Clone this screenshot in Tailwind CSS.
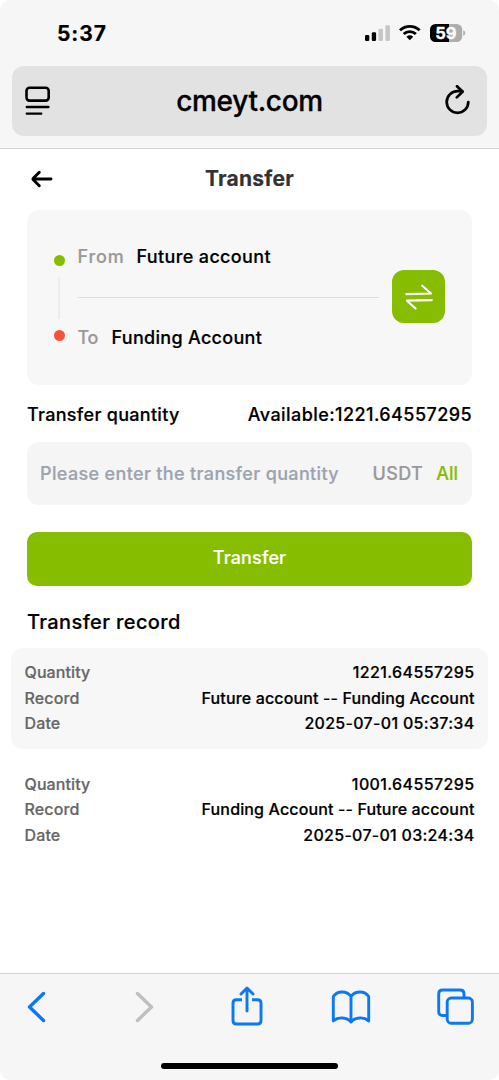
<!DOCTYPE html>
<html lang="en">
<head>
<meta charset="utf-8">
<title>Transfer</title>
<script src="https://cdn.jsdelivr.net/npm/@tailwindcss/browser@4"></script>
</head>
<body class="bg-white">
<div class="flex h-[1080px] w-[499px] flex-col overflow-hidden bg-white font-['Inter',sans-serif] font-medium text-black [-webkit-text-stroke:0.2px]">

  <!-- Status bar and address bar -->
  <header class="h-[149px] shrink-0 rounded-t-[10px] border-b border-[#d4d4d4] bg-[#f6f6f6]">
    <div class="flex h-[66px] items-center justify-between pr-[33px] pl-[57px]">
      <div class="pt-px text-[21px] leading-none font-bold tracking-[0.9px]">5:37</div>
      <svg class="h-[18px] w-[102px]" viewBox="0 0 102 18">
        <g transform="translate(1 1)">
          <rect x="0" y="10" width="4.300" height="6" rx="1.300"/>
          <rect x="6.800" y="7.300" width="4.300" height="8.700" rx="1.300"/>
          <rect x="13.500" y="3.800" width="4.500" height="12.200" rx="1.300" fill="#c6c6c6"/>
          <rect x="20.400" y="0.300" width="4.500" height="15.700" rx="1.300" fill="#c6c6c6"/>
        </g>
        <g fill="none" stroke="#000" stroke-width="2.900">
          <path d="M36 6.300a14.200 14.200 0 0 1 19.600 0"/>
          <path d="M39.700 10a9 9 0 0 1 12.200 0"/>
        </g>
        <path d="M42.400 12.700a5.200 5.200 0 0 1 6.800 0L45.800 16.200z"/>
        <path d="M71.500 0H85.100V18H71.500A5.500 5.500 0 0 1 66 12.500V5.500A5.500 5.500 0 0 1 71.500 0z"/>
        <path d="M85.100 0H92.700A5.500 5.500 0 0 1 98.200 5.500V12.500A5.500 5.500 0 0 1 92.700 18H85.100z" fill="#adadad"/>
        <path d="M99.300 6.200q2 .7 2 2.900t-2 2.900z" fill="#adadad"/>
        <text x="71.200" y="15" font-size="16.500" font-weight="700" fill="#fff" stroke="#fff" stroke-width="0.300">59</text>
      </svg>
    </div>
    <div class="mx-3 flex h-[70px] items-center justify-between rounded-xl bg-[#e2e2e2] pr-[17px] pl-[13px]">
      <svg class="h-[30px] w-[26px]" viewBox="0 0 26 30" fill="none" stroke="#000" stroke-width="2.600" stroke-linecap="round">
        <rect x="1.500" y="1.700" width="22.200" height="12.900" rx="3"/>
        <path d="M1.800 21H23.400M1.800 27.600H16.200" stroke-width="2.400"/>
      </svg>
      <div class="pl-[3px] text-[28px] leading-none tracking-[-0.300px] [-webkit-text-stroke:0.3px]">cmeyt.com</div>
      <svg class="mb-[2px] h-[30px] w-[25px]" viewBox="0 0 25 30" fill="none" stroke="#000" stroke-width="2.700" stroke-linecap="round" stroke-linejoin="round">
        <path d="M23.300 17A10.800 10.800 0 1 1 12.500 6.200H17.200"/>
        <path d="M12 1.200 17.600 6.800 11.800 12.400"/>
      </svg>
    </div>
  </header>

  <main class="flex grow flex-col px-[27px]">
    <div class="grid h-[61px] grid-cols-[24px_1fr_24px] items-center pb-[2px]">
      <svg class="mt-px ml-1 h-[18px] w-[22px]" viewBox="0 0 22 18" fill="none" stroke="#000" stroke-width="2.900" stroke-linecap="round" stroke-linejoin="round">
        <path d="M20 9H2.500M8.300 2.200 2.300 8.300q-.7.700 0 1.400L8.300 15.800"/>
      </svg>
      <h1 class="text-center text-[21px] leading-none font-bold tracking-[0.250px] text-[#333]">Transfer</h1>
    </div>

    <!-- Account selection -->
    <section class="flex h-[175px] shrink-0 items-center rounded-xl bg-[#f7f7f7] pr-[27px] pl-[26px] text-[18px] leading-[22px]">
      <div class="flex w-[12px] flex-col items-center">
        <span class="size-[11px] rounded-full bg-[#86bd00]"></span>
        <span class="my-[11px] h-[42px] w-[2px] bg-[#ececec]"></span>
        <span class="size-[11px] rounded-full bg-[#fb513c]"></span>
      </div>
      <div class="ml-[12.500px] w-[301.500px]">
        <div class="flex"><span class="w-[59px] tracking-[0.900px] text-[#999]">From</span><span class="tracking-[0.360px]">Future account</span></div>
        <div class="my-[29px] h-px bg-[#dcdcdc]"></div>
        <div class="flex"><span class="w-[34px] tracking-[-0.300px] text-[#999]">To</span><span class="tracking-[0.300px]">Funding Account</span></div>
      </div>
      <button class="mb-[2px] ml-auto flex size-[53px] items-center justify-center rounded-xl bg-[#86bd00]">
        <svg class="h-[27px] w-[30px]" viewBox="0 0 30 27" fill="none" stroke="#fff" stroke-width="2.200" stroke-linecap="round" stroke-linejoin="round">
          <path d="M2.300 11.200 27 10.500 18.300 2.700M27.700 17.200 3 17.700 11.500 25.500"/>
        </svg>
      </button>
    </section>

    <div class="flex h-[57px] shrink-0 items-center justify-between pt-[2px] text-[18px] leading-none">
      <span class="tracking-[0.300px]">Transfer quantity</span><span class="tracking-[0.430px]">Available:1221.64557295</span>
    </div>

    <div class="flex h-[63px] shrink-0 items-center rounded-xl bg-[#f5f5f5] pr-[14px] pl-[13px] text-[18px] leading-none">
      <span class="tracking-[0.350px] whitespace-nowrap text-[#9ca3af]">Please enter the transfer quantity</span>
      <span class="ml-auto tracking-[0.400px] text-[#999]">USDT</span>
      <span class="ml-[13px] text-[#86bd00]">All</span>
    </div>

    <button class="mt-[27px] h-[54px] shrink-0 rounded-[10px] bg-[#86bd00] pb-0.5 text-[18px] leading-none tracking-[0.150px] text-white">Transfer</button>

    <h2 class="flex h-[62px] shrink-0 items-center pt-[9px] text-[20px] leading-none tracking-[0.380px]">Transfer record</h2>

    <!-- Records -->
    <section class="-mx-4 text-[16px] leading-[25.500px]">
      <div class="h-[101px] rounded-xl bg-[#f7f7f7] px-[13.500px] pt-[12px]">
        <div class="flex justify-between"><span class="tracking-[0.100px] text-[#666]">Quantity</span><span class="tracking-[0.380px]">1221.64557295</span></div>
        <div class="flex justify-between"><span class="tracking-[0.150px] text-[#666]">Record</span><span class="tracking-[0.140px]">Future account -- Funding Account</span></div>
        <div class="flex justify-between"><span class="tracking-[0.150px] text-[#666]">Date</span><span class="tracking-[0.310px]">2025-07-01 05:37:34</span></div>
      </div>
      <div class="mt-[10px] h-[101px] rounded-xl px-[13.500px] pt-[12.500px]">
        <div class="flex justify-between"><span class="tracking-[0.100px] text-[#666]">Quantity</span><span class="tracking-[0.380px]">1001.64557295</span></div>
        <div class="flex justify-between"><span class="tracking-[0.150px] text-[#666]">Record</span><span class="tracking-[0.140px]">Funding Account -- Future account</span></div>
        <div class="flex justify-between"><span class="tracking-[0.150px] text-[#666]">Date</span><span class="tracking-[0.280px]">2025-07-01 03:24:34</span></div>
      </div>
    </section>
  </main>

  <!-- Browser toolbar -->
  <footer class="flex h-[107px] shrink-0 flex-col items-center rounded-b-[10px] border-t border-[#d4d4d4] bg-[#f6f6f6]">
    <nav class="flex h-[66px] w-full items-center pl-[26px]">
      <svg class="h-[32px] w-[20px]" viewBox="0 0 20 32" fill="none" stroke="#0b79f3" stroke-width="3.400" stroke-linecap="round" stroke-linejoin="round"><path d="M17.500 2.500 3.500 16 17.500 29.500"/></svg>
      <svg class="ml-[89px] h-[32px] w-[20px]" viewBox="0 0 20 32" fill="none" stroke="#bfbfbf" stroke-width="3.400" stroke-linecap="round" stroke-linejoin="round"><path d="M2.500 2.500 16.500 16 2.500 29.500"/></svg>
      <svg class="mb-[2px] ml-[76px] h-[40px] w-[32px]" viewBox="0 0 32 40" fill="none" stroke="#0b79f3" stroke-width="2.900" stroke-linecap="round" stroke-linejoin="round"><path d="M11 13.700H5.500Q2 13.700 2 17.200V34.500Q2 38 5.500 38H26.500Q30 38 30 34.500V17.200Q30 13.700 26.500 13.700H21" stroke-linecap="butt"/><path d="M16 25V2.200M10 8 16 2 22 8"/></svg>
      <svg class="mb-px ml-[68px] h-[34px] w-[40px]" viewBox="0 0 40 34" fill="none" stroke="#0b79f3" stroke-width="2.900" stroke-linecap="round" stroke-linejoin="round"><path d="M20 6.500C18 3.500 14.500 2 11 2S4.500 3.200 2.300 6.500V31C7 26.500 16 27 20 32 24 27 33 26.500 37.700 31V6.500C35.500 3.200 32.500 2 29 2S22 3.500 20 6.500V31.500"/></svg>
      <svg class="mt-[-1px] ml-[66px] h-[38px] w-[38px]" viewBox="0 0 38 38" fill="none" stroke="#0b79f3" stroke-width="2.900" stroke-linejoin="round"><rect x="10.200" y="10" width="25.200" height="25.200" rx="4"/><path d="M27 9.500V6Q27 2 23 2H5.700Q1.700 2 1.700 6V23.500Q1.700 27.500 5.700 27.500H10"/></svg>
    </nav>
    <div class="mt-[23px] h-[6px] w-[177px] shrink-0 rounded-full bg-black"></div>
  </footer>
</div>
</body>
</html>
